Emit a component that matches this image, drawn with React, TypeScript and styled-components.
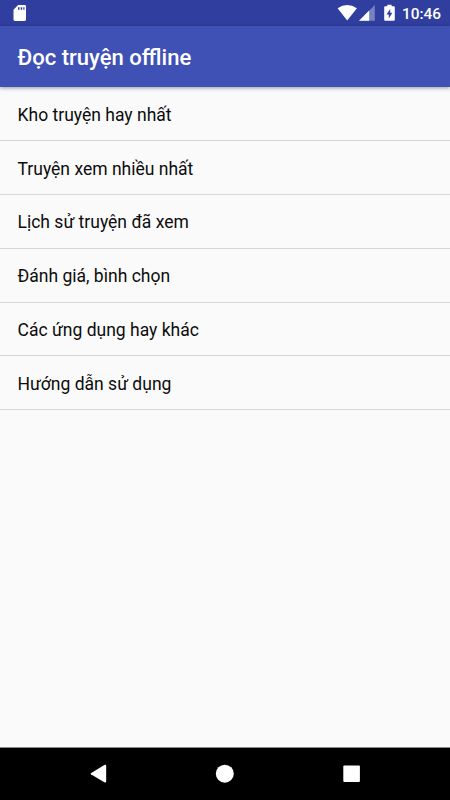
import React from 'react';
import styled, { createGlobalStyle } from 'styled-components';

const GlobalStyle = createGlobalStyle`
  * { box-sizing: border-box; }
  body { margin: 0; background: #fafafa; font-family: Roboto, "Noto Sans", sans-serif; }
`;

const Screen = styled.div`
  display: flex;
  flex-direction: column;
  width: 450px;
  height: 800px;
  overflow: hidden;
  background: #fafafa;
`;

const StatusBar = styled.div`
  display: flex;
  align-items: center;
  justify-content: space-between;
  flex: none;
  height: 26px;
  padding: 0 9px 0 12px;
  background: #303f9f;
  color: #fff;
`;

const StatusGroup = styled.div`
  display: flex;
  align-items: center;
  height: 26px;
`;

const StatusIcon = styled.svg<{ $gap?: number }>`
  display: block;
  flex: none;
  margin-right: ${({ $gap = 0 }) => $gap}px;
`;

const Clock = styled.time`
  font-size: 15.4px;
  line-height: 26px;
  padding-top: 2px;
  font-weight: 500;
  width: 39px;
  white-space: nowrap;
`;

const Toolbar = styled.header`
  display: flex;
  align-items: center;
  flex: none;
  height: 61px;
  padding: 3px 17.5px 0;
  background: #3f51b5;
  box-shadow: 0 1px 4px rgba(0, 0, 0, 0.4);
  z-index: 1;
`;

const Title = styled.h1`
  margin: 0;
  color: #fff;
  font-size: 22.05px;
  line-height: 30px;
  font-weight: 500;
`;

const Menu = styled.ul`
  flex: 1;
  margin: 0;
  padding: 0.4px 0 0;
  list-style: none;
`;

const MenuItem = styled.li`
  display: flex;
  align-items: center;
  height: 53.8px;
  padding: 2px 17.5px 0;
  border-bottom: 1px solid #d6d6d6;
  color: #0c0c0c;
  font-size: 17.52px;
  line-height: 24px;
`;

const NavBar = styled.nav`
  display: grid;
  grid-template-columns: 126px 126px 126px;
  justify-content: center;
  justify-items: center;
  flex: none;
  height: 53px;
  padding-top: 16px;
  border-top: 1px solid #888;
  background: #000;
`;

const items = [
  'Kho truyện hay nhất',
  'Truyện xem nhiều nhất',
  'Lịch sử truyện đã xem',
  'Đánh giá, bình chọn',
  'Các ứng dụng hay khác',
  'Hướng dẫn sử dụng',
];

export default function App() {
  return (
    <>
      <GlobalStyle />
      <Screen>
        <StatusBar>
          <StatusGroup>
            <StatusIcon width="16" height="26" viewBox="0 0 16 26" fill="#fff">
              <path
                fillRule="evenodd"
                d="M6.2 5H12.6Q14 5 14 6.4V19.6Q14 21 12.6 21H2.9Q1.5 21 1.5 19.6V9.7ZM6 7.2V9.7H7.5V7.2ZM8.7 7.2V9.7H10.2V7.2ZM11.3 7.2V9.7H12.5V7.2Z"
              />
            </StatusIcon>
          </StatusGroup>
          <StatusGroup>
            <StatusIcon width="20" height="26" viewBox="0 0 20 26" fill="#fff" $gap={2}>
              <path d="M.6 8.3Q10.2 1.5 19.9 8.3L10.2 20.6Z" />
            </StatusIcon>
            <StatusIcon width="16" height="26" viewBox="0 0 16 26" fill="#fff" $gap={8}>
              <path d="M0 20.8L15.8 5V20.8Z" opacity=".35" />
              <path d="M0 20.8L10.2 10.6V20.8Z" />
            </StatusIcon>
            <StatusIcon width="12" height="26" viewBox="0 0 12 26" fill="#fff" $gap={7}>
              <path
                fillRule="evenodd"
                d="M4.3 6.2V4.7H8.6V6.2H10.8Q11.8 6.2 11.8 7.2V19.8Q11.8 20.8 10.8 20.8H2.2Q1.2 20.8 1.2 19.8V7.2Q1.2 6.2 2.2 6.2ZM7.2 9L3.5 14.4H5.8V18.6L9.4 12.8H7.2Z"
              />
            </StatusIcon>
            <Clock>10:46</Clock>
          </StatusGroup>
        </StatusBar>
        <Toolbar>
          <Title>Đọc truyện offline</Title>
        </Toolbar>
        <Menu>
          {items.map((label) => (
            <MenuItem key={label}>{label}</MenuItem>
          ))}
        </Menu>
        <NavBar>
          <svg width="18" height="20" viewBox="0 0 18 20" fill="#fff">
            <path d="M.9 9.2L14.3 1Q16.2 0 16.2 2V17.2Q16.2 19.2 14.3 18.2L.9 10.3Q.2 9.8 .9 9.2Z" />
          </svg>
          <svg width="20" height="20" viewBox="0 0 20 20" fill="#fff">
            <circle cx="9.8" cy="9.7" r="9" />
          </svg>
          <svg width="18" height="20" viewBox="0 0 18 20" fill="#fff">
            <rect x="1.3" y="1.5" width="16.6" height="16.6" rx="1" />
          </svg>
        </NavBar>
      </Screen>
    </>
  );
}
